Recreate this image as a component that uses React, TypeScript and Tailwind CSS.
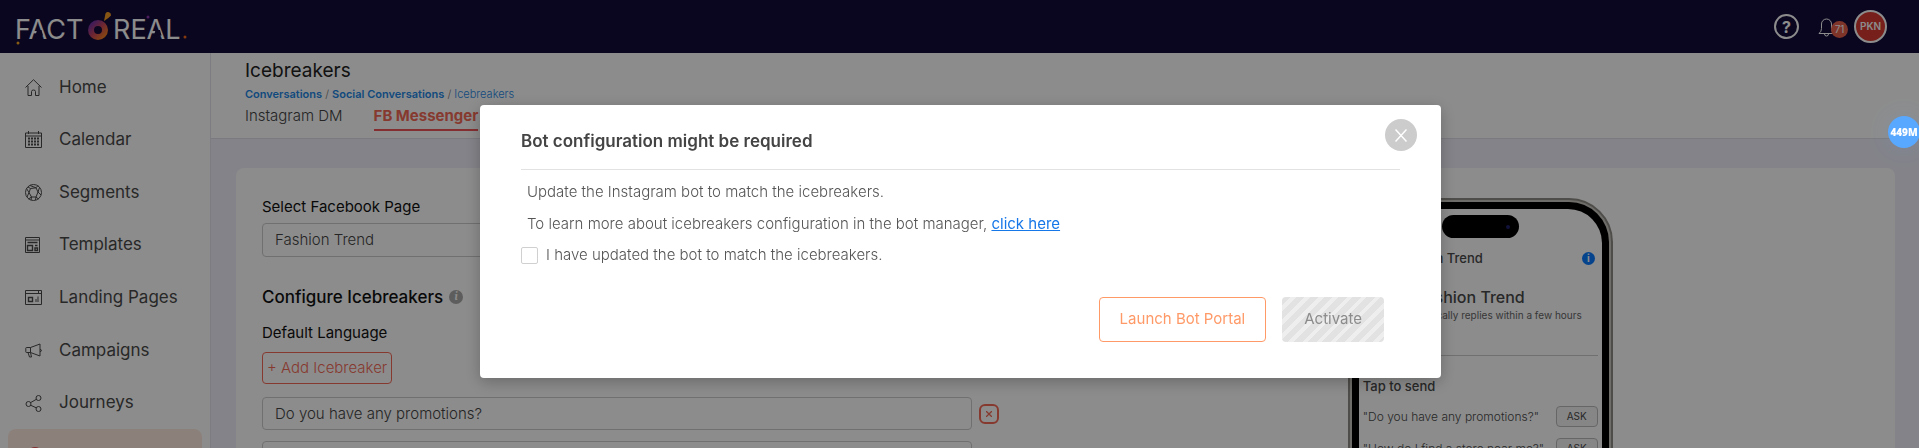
import type { ReactNode } from "react";

const navItems = [
  { label: "Home", icon: "home" },
  { label: "Calendar", icon: "calendar" },
  { label: "Segments", icon: "segments" },
  { label: "Templates", icon: "templates" },
  { label: "Landing Pages", icon: "landing" },
  { label: "Campaigns", icon: "campaigns" },
  { label: "Journeys", icon: "journeys" },
];

const icons: Record<string, ReactNode> = {
  home: (
    <path d="M.5 8.5 8.5 .7 16.5 8.5M3 7v9.500h3.500v-4q0-1.500 2-1.500t2 1.500v4H14V7" />
  ),
  calendar: (
    <>
      <path d="M.5 2h16v14.500H.5zM.5 5h16M3.500 0v3M13.500 0v3" />
      <path d="M3 7.500h11M3 10.500h11M3 13.500h11" strokeWidth="2" strokeDasharray="2 1" />
    </>
  ),
  segments: (
    <>
      <circle cx="8.500" cy="8.500" r="8" />
      <path d="M5.500 4.500 11 3.800 13 8l-2 5H6.500L4 8.500z" />
      <path d="M3 3l2.500 1.500M5 1.500l6 2.300M11 3.800 13 1.500M14.500 3.500 13 8M11 13l2.500 2M6.500 13 6 16M11 13l-.5 3M6.500 13 3.500 15M4 8.500 1.500 4.500M2 13 4 8.500M13 8l3 3" />
    </>
  ),
  templates: (
    <>
      <path d="M.5.5h14v15H.5zM.5 3h14" />
      <path d="M2.500 5.500h10M2.500 8.500h5v5h-5zM10 8.500h2.500M10 11h2.500v2.500H10z" strokeWidth="1.400" />
    </>
  ),
  landing: (
    <>
      <path d="M.5 1.500h16v14H.5zM.5 4.500h16M13.500 1.500v3" />
      <path d="M3.500 8.500h4v4h-4z" strokeWidth="1.400" />
      <path d="M11 13v-3M13 13V7.500" strokeWidth="1.600" opacity=".6" />
    </>
  ),
  campaigns: (
    <path d="M1.500 5.500h4L15 2v12l-9.500-3.500h-4q-.7 0-.7-.7V6.200q0-.7.7-.7zM5.500 5.500v5M3 10.500l1.500 4.500h2l-1-4.500M15 7.500q1.500 0 1.500 1T15 9.500" />
  ),
  journeys: (
    <>
      <circle cx="3.500" cy="9" r="2.500" />
      <circle cx="13.500" cy="3" r="2.500" />
      <circle cx="13.500" cy="14" r="2.500" />
      <path d="m5.500 7.700 6-3.500M5.500 10.200l6 2.700" />
    </>
  ),
};

const icebreakers = ["Do you have any promotions?", "How do I find a store near me?"];

const Logo = () => (
  <svg width="176" height="44" viewBox="0 0 176 44" role="img" aria-label="Factoreal" className="font-[Inter]">
    <defs>
      <linearGradient id="ring" x1="0" y1="0" x2="1" y2="1">
        <stop offset="0" stopColor="#6b2fa8" />
        <stop offset=".5" stopColor="#c8455a" />
        <stop offset="1" stopColor="#f5821f" />
      </linearGradient>
    </defs>
    <g fill="#fff" fontSize="27">
      <text x="2" y="34">FACT</text>
      <text x="100" y="34">REAL</text>
    </g>
    {/* open up the crossbars of the two As */}
    <path d="M22.500 30.500h7.500L28.500 25h-4.500zM141 30.500h7.500L147 25h-4.500z" fill="#140b3a" />
    <circle cx="85" cy="25" r="7" fill="none" stroke="url(#ring)" strokeWidth="6" />
    <path d="M91 16q1-5 1.500-7.500a3 3 0 0 1 5.500 2Q96 13 91 16z" fill="#f59a23" />
    <circle cx="5" cy="38" r="1.500" fill="#f5a623" />
    <circle cx="135" cy="12" r="1.500" fill="#8a35a8" />
    <circle cx="172" cy="32" r="1.500" fill="#f26a1b" />
  </svg>
);

const TopBar = () => (
  <header className="flex h-[53px] items-center justify-between bg-[#140b3a] pr-8 pl-[13px]">
    <Logo />
    <div className="flex items-center">
      <button aria-label="Help" className="flex size-[25px] items-center justify-center rounded-full border-2 border-white text-base font-bold text-white">
        ?
      </button>
      <button aria-label="Notifications" className="relative ml-[19px] h-5 w-4">
        <svg width="18" height="20" viewBox="0 0 18 20" fill="none" stroke="#fff">
          <path d="M1 16.500h15q-2.500-2-2.500-5V7a5 5 0 0 0-10 0v4.500q0 3-2.500 5zM6.500 17a2 2 0 0 0 4 0" />
        </svg>
        <span className="absolute top-1 left-[13px] flex size-[17px] items-center justify-center rounded-full bg-[#e8604c] text-[10px] text-white">
          71
        </span>
      </button>
      <button className="ml-5 flex size-[33px] items-center justify-center rounded-full border-2 border-white bg-[#d93a32] text-[10px] font-semibold text-white">
        PKN
      </button>
    </div>
  </header>
);

const Sidebar = () => (
  <nav className="w-[211px] shrink-0 border-r border-[#e4e4ec] bg-white px-2 pt-2">
    <div className="grid h-[421px] grid-rows-8">
      {navItems.map((item) => (
        <a key={item.label} href="#" className="flex items-center gap-[17px] pl-[17px] text-[17px] text-[#4a4a4a]">
          <svg width="17" height="17" viewBox="0 0 17 17" fill="none" stroke="currentColor">
            {icons[item.icon]}
          </svg>
          {item.label}
        </a>
      ))}
      <a href="#" aria-label="Conversations" className="rounded-lg bg-[#ffeae0] pt-[18px] pl-[19px]">
        <span className="block size-4 rounded-full bg-[#f0555a]" />
      </a>
    </div>
  </nav>
);

const PageHeader = () => (
  <div className="h-[86px] border-b border-[#e0e0e8] bg-white pt-[7px] pl-[34px]">
    <h1 className="text-[19px] leading-[22px] text-[#222]">Icebreakers</h1>
    <div className="mt-1 text-[11px] leading-4 font-light text-[#777]">
      <a href="#" className="font-semibold text-[#1e88e5]">Conversations</a> /{" "}
      <a href="#" className="font-semibold text-[#1e88e5]">Social Conversations</a> /{" "}
      <span className="text-[#1e88e5]">Icebreakers</span>
    </div>
    <div className="mt-1 flex items-start gap-[31px] text-[15px] leading-5">
      <button className="font-light text-[#444]">Instagram DM</button>
      <button className="border-b-2 border-[#f0555a] pb-[3px] font-bold text-[#f56a56]">FB Messenger</button>
    </div>
  </div>
);

const Phone = () => (
  <div className="mx-auto mt-[30px] h-[540px] w-[265px] rounded-[44px] border-2 border-[#8f8c85] bg-[#c9c6bf] p-[2px]">
    <div className="h-full rounded-[40px] bg-black p-[7px]">
      <div className="h-full rounded-[34px] bg-white px-1 pt-[6px] text-[#4a4a4a]">
        <div className="mx-auto flex h-[23px] w-[77px] items-center justify-end rounded-full bg-black pr-[9px]">
          <span className="size-1 rounded-full bg-[#20206a]" />
        </div>
        <div className="mt-[11px] flex items-center justify-between pr-[3px] pl-8 text-[13px] leading-[18px] font-medium">
          Fashion Trend
          <span className="flex size-[13px] items-center justify-center rounded-full bg-[#0a7cff] text-[10px] font-bold text-white">i</span>
        </div>
        <div className="mt-5 mr-4 ml-auto w-fit">
          <div className="text-base leading-5 font-medium">Fashion Trend</div>
          <div className="text-[10px] leading-4 text-[#666]">Typically replies within a few hours</div>
        </div>
        <hr className="mt-8 border-[#ccc]" />
        <div className="mt-5 text-[13px] leading-5 font-medium">Tap to send</div>
        {icebreakers.map((question) => (
          <div key={question} className="mt-[9px] flex h-[23px] items-center justify-between text-xs font-light">
            <span>"{question}"</span>
            <button className="h-[21px] w-[42px] rounded border border-[#bbb] bg-[#f4f4f4] text-[10px] font-normal">ASK</button>
          </div>
        ))}
      </div>
    </div>
  </div>
);

const Content = () => (
  <div className="mt-[29px] mr-6 ml-[25px] grid h-[600px] grid-cols-2 rounded-lg bg-white">
    <div className="pt-7 pr-[67px] pl-[26px] text-[#111]">
      <label htmlFor="page" className="block text-[15px] leading-[22px]">Select Facebook Page</label>
      <select id="page" className="mt-[5px] h-[34px] w-full appearance-none rounded border border-[#ccc] px-3 text-[15px] font-light text-[#444]">
        <option>Fashion Trend</option>
      </select>
      <h2 className="mt-7 flex items-center gap-1.5 text-[17px] leading-6 font-medium">
        Configure Icebreakers
        <span className="flex size-[14px] items-center justify-center rounded-full bg-[#aaa] font-serif text-[11px] font-bold text-white italic">i</span>
      </h2>
      <div className="mt-[14px] text-[15px] leading-5">Default Language</div>
      <button className="mt-[9px] mb-0.5 h-8 rounded border border-[#f56a56] px-1 text-[15px] font-light text-[#f56a56]">
        + Add Icebreaker
      </button>
      {icebreakers.map((question) => (
        <div key={question} className="mt-[11px] flex items-center gap-[7px]">
          <input
            aria-label="Icebreaker"
            defaultValue={question}
            className="h-[33px] min-w-0 flex-1 rounded border border-[#ccc] px-3 text-[15px] font-light text-[#444]"
          />
          <button aria-label="Remove icebreaker" className="flex size-5 items-center justify-center rounded-md border-2 border-[#f56a56] text-[#f56a56]">
            <svg width="6" height="6" viewBox="0 0 6 6" stroke="currentColor" strokeWidth="1.300">
              <path d="m0 0 6 6M6 0 0 6" />
            </svg>
          </button>
        </div>
      ))}
    </div>
    <Phone />
  </div>
);

const BotDialog = () => (
  <div className="fixed inset-0 flex items-start justify-center bg-black/45 pt-[105px] pl-0.5">
    <div role="dialog" aria-labelledby="dialog-title" className="relative w-full max-w-[961px] rounded bg-white px-[41px] pb-9 shadow-[0_4px_16px_#00000040]">
      <button aria-label="Close" className="absolute top-[14px] right-6 flex size-8 items-center justify-center rounded-full bg-[#ccc]">
        <svg width="12" height="13" viewBox="0 0 12 13" stroke="#fff" strokeWidth="1.500">
          <path d="m.5.5 11 12M11.500.5.5 12.500" />
        </svg>
      </button>
      <h2 id="dialog-title" className="border-b border-[#e2e2e2] pt-6 pb-4 text-[17px] leading-6 font-semibold text-[#444]">
        Bot configuration might be required
      </h2>
      <div className="mt-3 pl-[6px] text-[15px] leading-5 font-light text-[#555]">
        <p>Update the Instagram bot to match the icebreakers.</p>
        <p className="mt-3">
          To learn more about icebreakers configuration in the bot manager,{" "}
          <a href="#" className="font-normal text-[#1677e8] underline">click here</a>
        </p>
      </div>
      <label className="mt-[11px] flex items-center gap-2 text-[15px] leading-5 font-light text-[#555]">
        <input type="checkbox" className="size-[17px] appearance-none rounded-xs border border-[#d0d0d0]" />
        I have updated the bot to match the icebreakers.
      </label>
      <div className="mt-8 flex justify-end gap-4 pr-4 text-[15px]">
        <button className="h-[45px] rounded border border-[#ff9a68] px-5 text-[#ff9a68]">Launch Bot Portal</button>
        <button
          disabled
          className="h-[45px] rounded bg-[repeating-linear-gradient(135deg,#e2e2e2_0_6px,#eeeeee_6px_10px)] px-[22px] text-[#8c8c8c]"
        >
          Activate
        </button>
      </div>
    </div>
  </div>
);

export default function App() {
  return (
    <div className="flex h-screen flex-col overflow-hidden bg-[#efeff9] font-[Inter,sans-serif]">
      <TopBar />
      <div className="flex min-h-0 flex-1">
        <Sidebar />
        <main className="min-w-0 flex-1 overflow-hidden">
          <PageHeader />
          <Content />
        </main>
      </div>
      <BotDialog />
      <div className="fixed top-[116px] -right-px flex size-8 items-center justify-center rounded-full bg-[#59a8ff] font-['Open_Sans',sans-serif] text-[10px] font-extrabold text-white shadow-[0_0_24px_#59a8ff22]">
        449M
      </div>
    </div>
  );
}
